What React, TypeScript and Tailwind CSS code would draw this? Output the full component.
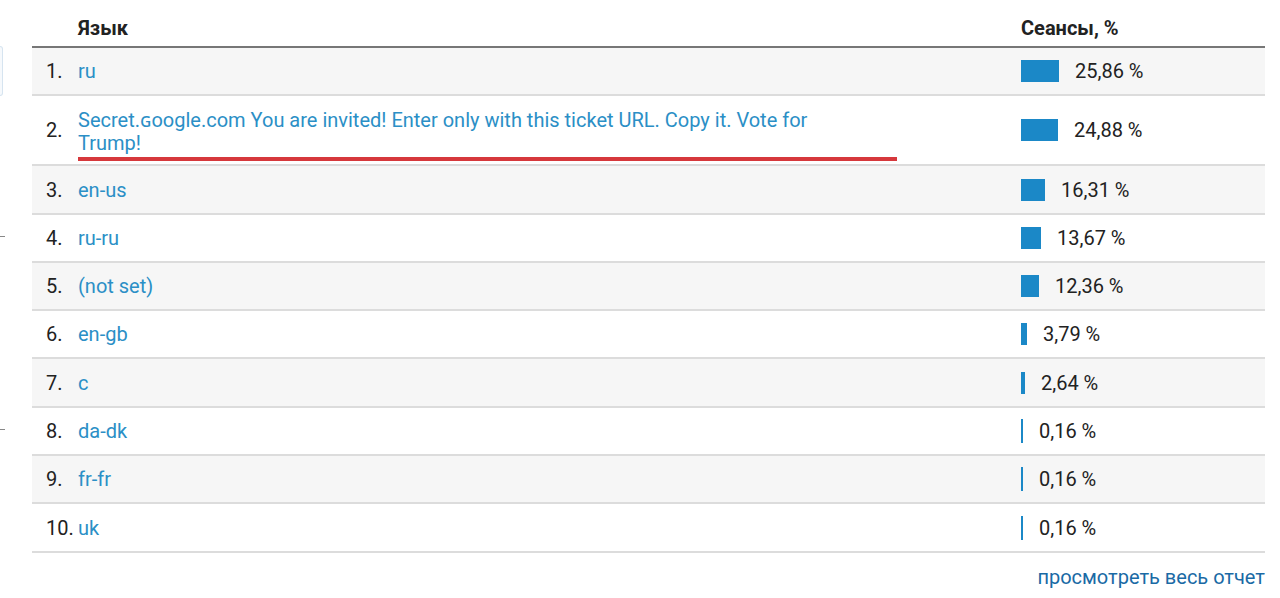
const rows = [
  { n: "1.", label: "ru", pct: 25.86, h: "h-[48px]" },
  { n: "2.", label: "Secret.ɢoogle.com You are invited! Enter only with this ticket URL. Copy it. Vote for Trump!", pct: 24.88, h: "h-[70px]", marked: true },
  { n: "3.", label: "en-us", pct: 16.31, h: "h-[49px]" },
  { n: "4.", label: "ru-ru", pct: 13.67, h: "h-[48px]" },
  { n: "5.", label: "(not set)", pct: 12.36, h: "h-[48px]" },
  { n: "6.", label: "en-gb", pct: 3.79, h: "h-[48px]" },
  { n: "7.", label: "c", pct: 2.64, h: "h-[49px]" },
  { n: "8.", label: "da-dk", pct: 0.16, h: "h-[48px]" },
  { n: "9.", label: "fr-fr", pct: 0.16, h: "h-[48px]" },
  { n: "10.", label: "uk", pct: 0.16, h: "h-[49px]" },
];

const fmt = (v: number) => v.toFixed(2).replace(".", ",") + " %";

export default function App() {
  return (
    <div
      className="flex h-[598px] w-[1280px] overflow-hidden bg-white text-[20px] text-[#222]"
      style={{ fontFamily: "Roboto, 'Noto Sans', sans-serif" }}
    >
      {/* cropped chart edge on the left */}
      <div className="flex w-8 shrink-0 flex-col">
        <div className="mt-[46px] h-[50px] w-[3px] rounded-r-sm border-y border-r border-[#d6e4f0] bg-[#f6f9fc]" />
        <div className="mt-[140px] h-px w-[5px] bg-[#888]" />
        <div className="mt-[192px] h-px w-[5px] bg-[#888]" />
      </div>

      <div className="flex w-[1233px] flex-col">
        <div className="flex h-[48px] items-end border-b-2 border-[#777] pb-[3px] font-bold">
          <div className="w-[46px] shrink-0" />
          <div className="flex-1">Язык</div>
          <div className="w-[244px] shrink-0">Сеансы, %</div>
        </div>

        {rows.map((r, i) => (
          <div
            key={r.n}
            className={`flex items-center border-b-2 border-[#dcdcdc] ${r.h} ${
              i % 2 === 0 ? "bg-[#f6f6f6]" : "bg-white"
            }`}
          >
            <div className="w-[14px] shrink-0" />
            <div className="w-[32px] shrink-0">{r.n}</div>
            <div className="flex-1">
              {r.marked ? (
                <div className="flex flex-col pt-[9px]">
                  <span className="w-[780px] leading-[23px] text-[#2b8fc6]">{r.label}</span>
                  <div className="mt-[2px] h-[4px] w-[819px] bg-[#d6383c]" />
                </div>
              ) : (
                <span className="text-[#2b8fc6]">{r.label}</span>
              )}
            </div>
            <div className="flex w-[244px] shrink-0 items-center">
              <div
                className={`bg-[#1b88c7] ${r.pct < 1 ? "h-[24px]" : "h-[22px]"}`}
                style={{ width: Math.max(2, Math.round(r.pct * 1.47)) }}
              />
              <span className="ml-[16px]">{fmt(r.pct)}</span>
            </div>
          </div>
        ))}

        <div className="flex justify-end pt-[9px] text-[#1a6aa5]">
          просмотреть весь отчет
        </div>
      </div>
    </div>
  );
}
